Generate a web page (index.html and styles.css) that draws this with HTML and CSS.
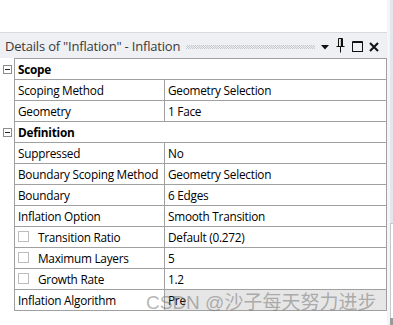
FILE: index.html
```html
<!DOCTYPE html>
<html>
<head>
<meta charset="utf-8">
<link rel="stylesheet" href="styles.css">
</head>
<body>
<div class="screen">
  <div class="main">
    <div class="top-space"></div>
    <div class="titlebar">
      <span class="title">Details of "Inflation" - Inflation</span>
      <span class="grip"></span>
      <span class="tb-icons">
        <svg class="ic-drop" width="8" height="5" viewBox="0 0 8 5"><path d="M0 0H8L4 4.5Z" fill="#111"/></svg>
        <svg class="ic-pin" width="9" height="15" viewBox="0 0 9 15"><path d="M2.5 0.5H6.5V8.5M2.5 0.5V8.5M0.5 8.5H8.5M4.5 8.5V14.5" stroke="#111" stroke-width="1" fill="none"/><path d="M5.5 0.5V8" stroke="#111" stroke-width="1.4"/></svg>
        <svg class="ic-max" width="11" height="11" viewBox="0 0 11 11"><rect x="0.5" y="1" width="10" height="9.5" fill="none" stroke="#111" stroke-width="1"/><path d="M0.5 1H10.5" stroke="#111" stroke-width="2"/></svg>
        <svg class="ic-close" width="10" height="10" viewBox="0 0 10 10"><path d="M1 1L9 9M9 1L1 9" stroke="#111" stroke-width="2"/></svg>
      </span>
    </div>
    <div class="details">
      <div class="row">
        <div class="gutter"><span class="expander"></span></div>
        <div class="cells first"><div class="header">Scope</div></div>
      </div>
      <div class="row">
        <div class="gutter"></div>
        <div class="cells"><div class="name">Scoping Method</div><div class="value">Geometry Selection</div></div>
      </div>
      <div class="row">
        <div class="gutter"></div>
        <div class="cells"><div class="name">Geometry</div><div class="value">1 Face</div></div>
      </div>
      <div class="row">
        <div class="gutter"><span class="expander"></span></div>
        <div class="cells"><div class="header">Definition</div></div>
      </div>
      <div class="row">
        <div class="gutter"></div>
        <div class="cells"><div class="name">Suppressed</div><div class="value">No</div></div>
      </div>
      <div class="row">
        <div class="gutter"></div>
        <div class="cells"><div class="name">Boundary Scoping Method</div><div class="value">Geometry Selection</div></div>
      </div>
      <div class="row">
        <div class="gutter"></div>
        <div class="cells"><div class="name">Boundary</div><div class="value">6 Edges</div></div>
      </div>
      <div class="row">
        <div class="gutter"></div>
        <div class="cells"><div class="name">Inflation Option</div><div class="value">Smooth Transition</div></div>
      </div>
      <div class="row">
        <div class="gutter"></div>
        <div class="cells"><div class="name"><span class="check"></span>Transition Ratio</div><div class="value">Default (0.272)</div></div>
      </div>
      <div class="row">
        <div class="gutter"></div>
        <div class="cells"><div class="name"><span class="check"></span>Maximum Layers</div><div class="value">5</div></div>
      </div>
      <div class="row">
        <div class="gutter"></div>
        <div class="cells"><div class="name"><span class="check"></span>Growth Rate</div><div class="value">1.2</div></div>
      </div>
      <div class="row">
        <div class="gutter"></div>
        <div class="cells"><div class="name">Inflation Algorithm</div><div class="value readonly">Pre</div></div>
      </div>
    </div>
    <div class="watermark">CSDN @沙子每天努力进步</div>
  </div>
  <div class="gap"></div>
  <div class="edge">
    <div class="edge-top"></div>
    <div class="edge-mid"></div>
    <div class="edge-bot"></div>
  </div>
</div>
</body>
</html>
```
FILE: styles.css
```css
html, body {
  margin: 0;
  padding: 0;
  background: #ffffff;
}
.screen {
  width: 393px;
  height: 325px;
  display: flex;
  overflow: hidden;
  font-family: "Open Sans", "Noto Sans CJK SC", sans-serif;
}
.main {
  width: 387px;
  position: relative;
  display: flex;
  flex-direction: column;
}
.top-space {
  height: 32px;
}
.titlebar {
  border-top: 1px solid #d6d9df;
  background: #eef0f3;
  display: flex;
  align-items: center;
  padding-left: 5px;
  padding-top: 1px;
  box-sizing: border-box;
  height: 26px;
}
.title {
  font-size: 13px;
  color: #3a3a3a;
  white-space: nowrap;
  letter-spacing: -0.2px;
}
.grip {
  flex: 1;
  height: 4px;
  margin: 1px 6px 0 6px;
  background: conic-gradient(#c3c7ce 25%, transparent 0 50%, #c3c7ce 0 75%, transparent 0) 0 0 / 2px 2px;
}
.tb-icons {
  display: flex;
  align-items: center;
  padding-right: 8px;
}
.ic-drop { margin-top: 2px; }
.ic-pin { margin-left: 7px; margin-bottom: 1px; }
.ic-max { margin-left: 7px; margin-top: 1px; }
.ic-close { margin-left: 6px; margin-top: 1px; }

.details {
  display: flex;
  flex-direction: column;
}
.row {
  display: flex;
  height: 21px;
}
.row:first-child {
  height: 22px;
}
.gutter {
  width: 14px;
  display: flex;
  align-items: center;
  padding-left: 3px;
  box-sizing: border-box;
}
.expander {
  width: 9px;
  height: 9px;
  box-sizing: border-box;
  border: 1px solid #8c8c8c;
  background: linear-gradient(#222, #222) center / 5px 1px no-repeat, #ffffff;
}
.cells {
  width: 373px;
  display: flex;
  box-sizing: border-box;
  border-left: 1px solid #a0a0a0;
  border-right: 1px solid #a0a0a0;
  border-bottom: 1px solid #a0a0a0;
  font-size: 11.8px;
  letter-spacing: -0.25px;
  color: #000;
}
.cells.first {
  border-top: 1px solid #a0a0a0;
}
.header {
  font-weight: bold;
  padding-left: 3px;
  display: flex;
  align-items: center;
}
.name {
  width: 150px;
  box-sizing: border-box;
  border-right: 1px solid #a0a0a0;
  padding-left: 3px;
  display: flex;
  align-items: center;
  white-space: nowrap;
  overflow: hidden;
}
.value {
  flex: 1;
  padding-left: 3px;
  display: flex;
  align-items: center;
  white-space: nowrap;
}
.value.readonly {
  background: #e6e6e6;
}
.check {
  flex: none;
  width: 11px;
  height: 11px;
  box-sizing: border-box;
  border: 1px solid #bdbdbd;
  background: #fff;
  margin-right: 9px;
  margin-bottom: 1px;
}
.watermark {
  position: absolute;
  left: 146px;
  top: 287px;
  font-size: 19px;
  white-space: nowrap;
  color: rgba(110, 110, 110, 0.5);
  font-family: "Liberation Sans", "Noto Sans CJK SC", sans-serif;
}
.gap {
  width: 3px;
  background: #f4f5f7;
}
.edge {
  width: 3px;
  display: flex;
  flex-direction: column;
}
.edge-top {
  height: 223px;
  background: #e3e6ec;
}
.edge-mid {
  flex: 1;
  border-left: 1px solid #c8c8c8;
  border-top: 1px solid #c8c8c8;
  background: #fff;
}
.edge-bot {
  height: 7px;
  background: #9a9a9a;
}
```
